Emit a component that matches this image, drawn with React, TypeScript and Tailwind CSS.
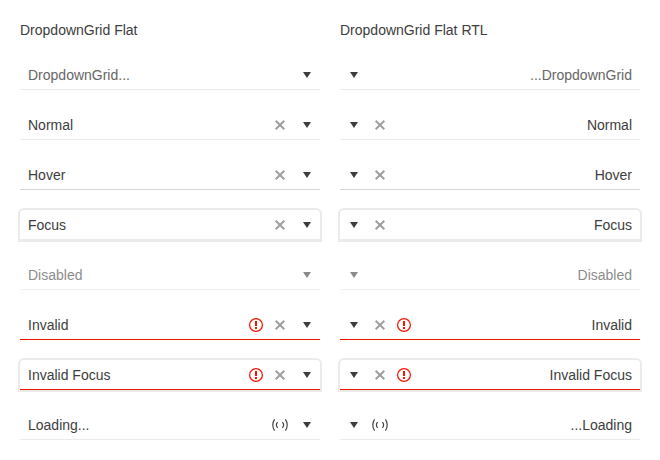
import React from "react";

type Kind = "placeholder" | "normal" | "hover" | "focus" | "disabled" | "invalid" | "invalidFocus" | "loading";

const rows: { kind: Kind; ltr: string; rtl: string }[] = [
  { kind: "placeholder", ltr: "DropdownGrid...", rtl: "...DropdownGrid" },
  { kind: "normal", ltr: "Normal", rtl: "Normal" },
  { kind: "hover", ltr: "Hover", rtl: "Hover" },
  { kind: "focus", ltr: "Focus", rtl: "Focus" },
  { kind: "disabled", ltr: "Disabled", rtl: "Disabled" },
  { kind: "invalid", ltr: "Invalid", rtl: "Invalid" },
  { kind: "invalidFocus", ltr: "Invalid Focus", rtl: "Invalid Focus" },
  { kind: "loading", ltr: "Loading...", rtl: "...Loading" },
];

const look: Record<Kind, string> = {
  placeholder: "border-[#ebebeb]",
  normal: "border-[#ebebeb]",
  hover: "border-[#d6d6d6]",
  focus: "border-[#ebebeb] rounded-t-[4px] shadow-[0_0_0_2px_#ebebeb]",
  disabled: "border-[#ebebeb] opacity-60",
  invalid: "border-[#f31700]",
  invalidFocus: "border-[#f31700] rounded-t-[4px] shadow-[0_0_0_2px_#ebebeb]",
  loading: "border-[#ebebeb]",
};

function Caret() {
  return (
    <svg viewBox="0 0 16 16" className="size-4" fill="currentColor">
      <path d="M4 5h8l-4 6z" />
    </svg>
  );
}

function Clear() {
  return (
    <svg viewBox="0 0 16 16" className="size-4 text-[#9e9e9e]" fill="none" stroke="currentColor" strokeWidth="2">
      <path d="M3.7 3.7l8.6 8.6M12.3 3.7l-8.6 8.6" />
    </svg>
  );
}

function Warning() {
  return (
    <svg viewBox="0 0 16 16" className="size-4 text-[#f31700]" fill="currentColor">
      <circle cx="8" cy="8" r="6.4" fill="none" stroke="currentColor" strokeWidth="1.25" />
      <path d="M7 4h2v5H7zM7 10h2v2H7z" />
    </svg>
  );
}

function Loader() {
  return (
    <svg viewBox="0 0 16 16" className="size-4" fill="none" stroke="currentColor" strokeWidth="1.15">
      <path d="M2.6 2.3C.2 5.4.2 10.6 2.6 13.7M13.4 2.3c2.4 3.1 2.4 8.3 0 11.4M5.6 5.2c-1.4 1.6-1.4 4 0 5.6M10.4 5.2c1.4 1.6 1.4 4 0 5.6" />
    </svg>
  );
}

function Picker({ kind, text }: { kind: Kind; text: string }) {
  const invalid = kind === "invalid" || kind === "invalidFocus";
  const clear = invalid || kind === "normal" || kind === "hover" || kind === "focus";
  return (
    <div className={`flex h-[30px] items-center border-b ${look[kind]}`}>
      <span className={`flex-1 px-2 text-start ${kind === "placeholder" ? "text-[#666666]" : ""}`}>
        <bdi dir="ltr">{text}</bdi>
      </span>
      <span className="flex items-center gap-2">
        {invalid && <Warning />}
        {clear && <Clear />}
        {kind === "loading" && <Loader />}
      </span>
      <span className="ml-[11px] mr-[5px] rtl:ml-[6px] rtl:mr-[10px]">
        <Caret />
      </span>
    </div>
  );
}

export default function App() {
  return (
    <main className="grid h-[460px] w-[660px] grid-cols-[300px_300px] gap-5 bg-white p-5 font-['Liberation_Sans',Arial,sans-serif] text-sm leading-5 text-[#3d3d3d]">
      {(["ltr", "rtl"] as const).map((dir) => (
        <section key={dir}>
          <h2>{dir === "ltr" ? "DropdownGrid Flat" : "DropdownGrid Flat RTL"}</h2>
          <div dir={dir} className="mt-5 flex flex-col gap-5">
            {rows.map((r) => (
              <Picker key={r.kind} kind={r.kind} text={r[dir]} />
            ))}
          </div>
        </section>
      ))}
    </main>
  );
}
